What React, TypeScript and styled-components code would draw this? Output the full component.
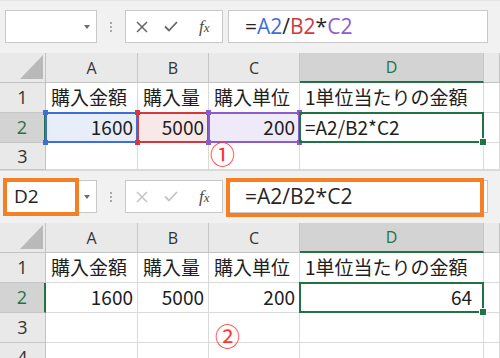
import styled, { createGlobalStyle } from "styled-components";

const GlobalStyle = createGlobalStyle`
  html, body {
    margin: 0;
    padding: 0;
    background: #fff;
  }
  body {
    font-family: "Open Sans", "Noto Sans CJK JP", sans-serif;
  }
`;

type Tone = "blue" | "red" | "purple" | "green";

const TONES: Record<Tone, { line: string; fill: string }> = {
  blue: { line: "#3f6fd3", fill: "#e8eef9" },
  red: { line: "#d3383e", fill: "#f9e8e8" },
  purple: { line: "#8a5dca", fill: "#eeeaf8" },
  green: { line: "#217346", fill: "#fff" },
};

const GREEN = "#217346";
const ORANGE = "#f57f25";

const Page = styled.div`
  width: 500px;
  height: 358px;
  overflow: hidden;
  display: flex;
  flex-direction: column;
`;

const Panel = styled.section<{ $height: number; $clip?: boolean }>`
  position: relative;
  flex: none;
  height: ${({ $height }) => $height}px;
  overflow: ${({ $clip }) => ($clip ? "hidden" : "visible")};
`;

/* ---------- formula bar ---------- */

const Toolbar = styled.div<{ $first?: boolean }>`
  height: 53px;
  box-sizing: border-box;
  display: flex;
  align-items: flex-start;
  padding: 9px 0 0 5px;
  background: #f1f1f1;
  border-top: 1px solid ${({ $first }) => ($first ? "#e4e4e4" : "#d9d9d9")};
`;

const NameBox = styled.div`
  position: relative;
  width: 92px;
  height: 33px;
  box-sizing: border-box;
  display: flex;
  align-items: center;
  padding: 0 6px 0 8px;
  background: #fff;
  border: 1px solid #c8c8c8;
  font-size: 19px;
  color: #222;
`;

const NameText = styled.span`
  flex: 1;
  line-height: 1;
`;

const Caret = styled.span`
  width: 0;
  height: 0;
  border-left: 3.5px solid transparent;
  border-right: 3.5px solid transparent;
  border-top: 4px solid #6b6b6b;
`;

const Grip = styled.div`
  width: 28px;
  height: 33px;
  display: flex;
  align-items: center;
  justify-content: center;
`;

const Dots = styled.span`
  width: 2px;
  height: 10px;
  background: repeating-linear-gradient(#a9a9a9 0 2px, transparent 2px 4px);
`;

const FxBox = styled.div`
  width: 98px;
  height: 33px;
  box-sizing: border-box;
  display: flex;
  align-items: center;
  background: #fff;
  border: 1px solid #c8c8c8;
`;

const Slot = styled.span<{ $ml: number }>`
  display: flex;
  margin-left: ${({ $ml }) => $ml}px;
`;

const FxLabel = styled.span`
  font-family: "Liberation Serif", serif;
  font-style: italic;
  font-size: 17px;
  color: #4a4a4a;
  line-height: 1;
  & > small {
    font-size: 13px;
  }
`;

const Formula = styled.div`
  position: relative;
  width: 260px;
  height: 33px;
  margin-left: 5px;
  box-sizing: border-box;
  display: flex;
  align-items: center;
  padding: 0 0 2px 16px;
  background: #fff;
  border: 1px solid #c8c8c8;
  font-size: 21px;
  color: #262626;
  white-space: nowrap;
`;

const Token = styled.span<{ $color?: string }>`
  color: ${({ $color }) => $color ?? "#262626"};
`;

const Mark = styled.span<{ $w: number; $h: number }>`
  position: absolute;
  left: -3px;
  top: -3px;
  width: ${({ $w }) => $w}px;
  height: ${({ $h }) => $h}px;
  box-sizing: border-box;
  border: 4px solid ${ORANGE};
  pointer-events: none;
`;

const CancelIcon = ({ color }: { color: string }) => (
  <svg width="12" height="12" viewBox="0 0 12 12">
    <path d="M1 1L11 11M11 1L1 11" stroke={color} strokeWidth="1.5" fill="none" />
  </svg>
);

const ConfirmIcon = ({ color }: { color: string }) => (
  <svg width="14" height="11" viewBox="0 0 14 11">
    <path d="M1 5.5L5 9.5L13 1" stroke={color} strokeWidth="1.8" fill="none" />
  </svg>
);

/* ---------- sheet ---------- */

const Sheet = styled.div<{ $rows: string }>`
  display: grid;
  grid-template-columns: 46px 92px 71px 91px 184px 1fr;
  grid-template-rows: ${({ $rows }) => $rows};
  overflow: hidden;
`;

const Corner = styled.div`
  position: relative;
  background: #e9e9e9;
  border-right: 1px solid #c3c3c3;
  border-bottom: 1px solid #c3c3c3;
  &::after {
    content: "";
    position: absolute;
    right: 2px;
    bottom: 3px;
    width: 23px;
    height: 24px;
    background: #b9b9b9;
    clip-path: polygon(100% 0, 100% 100%, 0 100%);
  }
`;

const ColHead = styled.div<{ $on?: boolean }>`
  box-sizing: border-box;
  display: flex;
  align-items: center;
  justify-content: center;
  background: ${({ $on }) => ($on ? "#d3d3d3" : "#e9e9e9")};
  border-right: 1px solid #c6c6c6;
  border-bottom: ${({ $on }) => ($on ? `2px solid ${GREEN}` : "1px solid #c3c3c3")};
  color: ${({ $on }) => ($on ? GREEN : "#333")};
  font-size: 16px;
`;

const RowHead = styled.div<{ $on?: boolean }>`
  box-sizing: border-box;
  display: flex;
  align-items: center;
  justify-content: center;
  padding-bottom: 1px;
  background: ${({ $on }) => ($on ? "#d3d3d3" : "#e9e9e9")};
  border-right: ${({ $on }) => ($on ? `2px solid ${GREEN}` : "1px solid #c3c3c3")};
  border-bottom: 1px solid #c6c6c6;
  color: ${({ $on }) => ($on ? GREEN : "#333")};
  font-size: 18px;
`;

const Cell = styled.div<{ $align?: "left" | "right"; $tone?: Tone; $pr?: number }>`
  position: relative;
  box-sizing: border-box;
  display: flex;
  align-items: center;
  justify-content: ${({ $align }) => ($align === "right" ? "flex-end" : "flex-start")};
  padding: 0 ${({ $pr }) => $pr ?? 4}px 2px 5px;
  background: ${({ $tone }) => ($tone ? TONES[$tone].fill : "#fff")};
  border-right: 1px solid #dadada;
  border-bottom: 1px solid #dadada;
  font-family: "Noto Sans CJK JP", sans-serif;
  font-size: 19px;
  color: #1e1e1e;
  white-space: nowrap;
`;

const Frame = styled.span<{ $tone: Tone }>`
  position: absolute;
  left: -1px;
  top: -1px;
  right: -1px;
  bottom: -1px;
  border: 2px solid ${({ $tone }) => TONES[$tone].line};
  pointer-events: none;
  z-index: 1;
`;

const Knob = styled.span<{ $tone: Tone; $x: "left" | "right"; $y: "top" | "bottom" }>`
  position: absolute;
  ${({ $x }) => $x}: -4px;
  ${({ $y }) => $y}: -4px;
  width: 5px;
  height: 5px;
  background: ${({ $tone }) => TONES[$tone].line};
`;

const FillHandle = styled.span`
  position: absolute;
  right: -5px;
  bottom: -5px;
  width: 6px;
  height: 6px;
  background: ${GREEN};
  border: 1px solid #fff;
`;

const Marker = styled.span<{ $x: number; $y: number }>`
  position: absolute;
  left: ${({ $x }) => $x}px;
  top: ${({ $y }) => $y}px;
  font-family: "Noto Sans CJK JP", sans-serif;
  font-size: 25px;
  line-height: normal;
  color: #ff3434;
  z-index: 2;
`;

const RangeFrame = ({ tone }: { tone: Tone }) => (
  <Frame $tone={tone}>
    {tone === "green" ? (
      <FillHandle />
    ) : (
      <>
        <Knob $tone={tone} $x="left" $y="top" />
        <Knob $tone={tone} $x="right" $y="top" />
        <Knob $tone={tone} $x="left" $y="bottom" />
        <Knob $tone={tone} $x="right" $y="bottom" />
      </>
    )}
  </Frame>
);

const HEADINGS = ["購入金額", "購入量", "購入単位", "1単位当たりの金額"];
const VALUES = ["1600", "5000", "200"];

const FormulaTokens = ({ colored }: { colored: boolean }) => (
  <>
    <Token>=</Token>
    <Token $color={colored ? TONES.blue.line : undefined}>A2</Token>
    <Token>/</Token>
    <Token $color={colored ? TONES.red.line : undefined}>B2</Token>
    <Token>*</Token>
    <Token $color={colored ? TONES.purple.line : undefined}>C2</Token>
  </>
);

const FormulaBar = ({ editing }: { editing: boolean }) => (
  <Toolbar $first={editing}>
    <NameBox>
      <NameText>{editing ? "" : "D2"}</NameText>
      <Caret />
      {!editing && <Mark $w={76} $h={38} />}
    </NameBox>
    <Grip>
      <Dots />
    </Grip>
    <FxBox>
      <Slot $ml={10}>
        <CancelIcon color={editing ? "#666" : "#c4c4c4"} />
      </Slot>
      <Slot $ml={16}>
        <ConfirmIcon color={editing ? "#666" : "#c4c4c4"} />
      </Slot>
      <Slot $ml={21}>
        <FxLabel>
          f<small>x</small>
        </FxLabel>
      </Slot>
    </FxBox>
    <Formula>
      <FormulaTokens colored={editing} />
      {!editing && <Mark $w={258} $h={39} />}
    </Formula>
  </Toolbar>
);

const Row = ({ n }: { n: number }) => (
  <>
    <RowHead>{n}</RowHead>
    <Cell />
    <Cell />
    <Cell />
    <Cell />
    <Cell />
  </>
);

const Grid = ({ editing, rows }: { editing: boolean; rows: string }) => {
  const tones: Tone[] = ["blue", "red", "purple"];
  const extra = rows.split(" ").length - 3;
  return (
    <Sheet $rows={rows}>
      <Corner />
      {["A", "B", "C", "D", ""].map((c) => (
        <ColHead key={c} $on={c === "D"}>
          {c}
        </ColHead>
      ))}

      <RowHead>1</RowHead>
      {HEADINGS.map((h) => (
        <Cell key={h}>{h}</Cell>
      ))}
      <Cell />

      <RowHead $on>2</RowHead>
      {VALUES.map((v, i) => (
        <Cell key={v} $align="right" $tone={editing ? tones[i] : undefined}>
          {v}
          {editing && <RangeFrame tone={tones[i]} />}
        </Cell>
      ))}
      {editing ? (
        <Cell>
          =A2/B2*C2
          <RangeFrame tone="green" />
        </Cell>
      ) : (
        <Cell $align="right" $pr={11}>
          64
          <RangeFrame tone="green" />
        </Cell>
      )}
      <Cell />

      {Array.from({ length: extra }, (_, k) => (
        <Row key={k} n={k + 3} />
      ))}
    </Sheet>
  );
};

export default function App() {
  return (
    <>
      <GlobalStyle />
      <Page>
        <Panel $height={170}>
          <FormulaBar editing />
          <Grid editing rows="30px 30px 30px 27px" />
          <Marker $x={210} $y={135}>
            ①
          </Marker>
        </Panel>
        <Panel $height={188} $clip>
          <FormulaBar editing={false} />
          <Grid editing={false} rows="30px 30px 30px 30px 30px" />
          <Marker $x={215} $y={147}>
            ②
          </Marker>
        </Panel>
      </Page>
    </>
  );
}
